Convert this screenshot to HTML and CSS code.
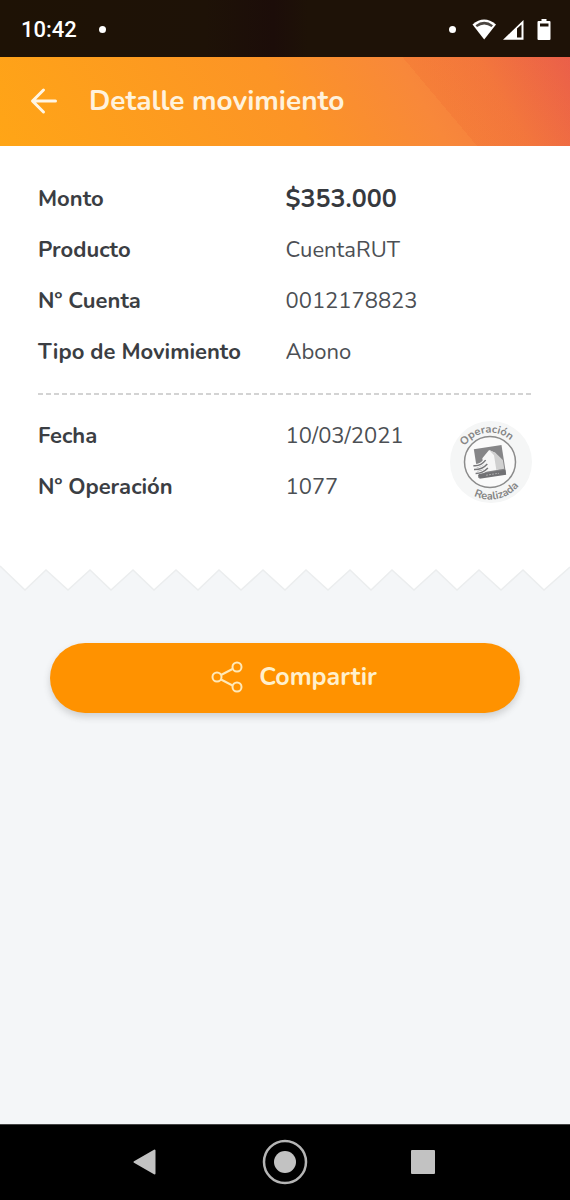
FILE: index.html
```html
<!DOCTYPE html>
<html lang="es">
<head>
<meta charset="utf-8">
<meta name="viewport" content="width=device-width, initial-scale=1">
<title>Detalle movimiento</title>
<link rel="stylesheet" href="styles.css">
</head>
<body>
<div class="screen">
  <div class="status">
    <span class="time">10:42</span>
    <span class="dot"></span>
    <span class="spacer"></span>
    <span class="dot"></span>
    <svg class="status-icons" width="80" height="24" viewBox="0 0 80 24" aria-hidden="true">
      <path d="M0.500 6.500Q12 -3.500 24 6.500L12.200 21.500Z" fill="#fff"/>
      <path d="M3.500 7.200Q12.200 0.500 21 7.200L19.500 9Q12.200 4 5 9Z" fill="#4a4540"/>
      <path d="M31 21.800L51.500 2V21.800Z" fill="#fff"/>
      <path d="M45 10.500L49.500 6.500V19.500H45Z" fill="#1e1207"/>
      <path d="M69.500 1h5v2h3a1 1 0 0 1 1 1v17a1 1 0 0 1-1 1H66.500a1 1 0 0 1-1-1V4a1 1 0 0 1 1-1h3z" fill="#fff"/>
      <path d="M68 5.500h8.500v3H68z" fill="#1e1207"/>
    </svg>
  </div>
  <header class="appbar">
    <button class="back" type="button" aria-label="Volver">
      <svg width="28" height="28" viewBox="0 0 28 28" aria-hidden="true">
        <path d="M25.500 14H3M13.500 3L2.500 14L13.500 25" fill="none" stroke="#fff6e4" stroke-width="3" stroke-linecap="round" stroke-linejoin="round"/>
      </svg>
    </button>
    <h1 class="title">Detalle movimiento</h1>
  </header>
  <main class="content">
    <section class="receipt">
      <dl class="details">
        <dt>Monto</dt><dd class="amount">$353.000</dd>
        <dt>Producto</dt><dd>CuentaRUT</dd>
        <dt>Nº Cuenta</dt><dd>0012178823</dd>
        <dt>Tipo de Movimiento</dt><dd>Abono</dd>
      </dl>
      <div class="divider"></div>
      <div class="operation">
        <dl class="details">
          <dt>Fecha</dt><dd>10/03/2021</dd>
          <dt>Nº Operación</dt><dd>1077</dd>
        </dl>
        <svg class="stamp" width="84" height="84" viewBox="0 0 84 84" role="img" aria-label="Operación Realizada">
          <defs>
            <path id="arc-top" d="M11 42.500A30 30 0 0 1 71 42.500"/>
            <path id="arc-bottom" d="M4 42.500A37 37 0 0 0 78 42.500"/>
          </defs>
          <circle cx="42" cy="42" r="41" fill="#f5f6f6"/>
          <circle cx="41" cy="42" r="25.500" fill="#fafafa" stroke="#8b8b8b" stroke-width="1.500"/>
          <g transform="rotate(-9 41 42)">
            <path d="M27 27H55V56H27Z" fill="#858587"/>
            <path d="M34 49V37L42 30L48 34V51H34Z" fill="#f6f6f6"/>
            <path d="M42 30L48 34L54 42V51H46V36Z" fill="#d0d0d0"/>
            <path d="M24 43Q31 45 37 39.500M24 47Q32 48.500 38 43.500M25 51Q32 52 38 47.500" fill="none" stroke="#f7f7f7" stroke-width="3.500"/>
            <path d="M24 43Q31 45 37 39.500M24 47Q32 48.500 38 43.500M25 51Q32 52 38 47.500" fill="none" stroke="#77777a" stroke-width="1.500"/>
            <path d="M28 52H55V57H28Z" fill="#717174"/>
            <path d="M35 54.500H48" stroke="#aaa" stroke-width="1" stroke-dasharray="2 1"/>
          </g>
          <text class="stamp-text"><textPath href="#arc-top" startOffset="46%" text-anchor="middle">Operación</textPath></text>
          <text class="stamp-text"><textPath href="#arc-bottom" startOffset="57%" text-anchor="middle">Realizada</textPath></text>
        </svg>
      </div>
    </section>
    <svg class="tear" viewBox="0 0 570 28" aria-hidden="true">
      <path d="M0 0V3L25 27L46 7L68 27L90 7L111 27L133 7L154 27L176 7L198 27L219 7L241 27L263 7L285 27L306 7L328 27L350 7L371 27L392 7L414 27L436 7L457 27L479 7L501 27L523 7L544 27L570 4V0Z" fill="#fff"/>
      <path d="M0 3L25 27L46 7L68 27L90 7L111 27L133 7L154 27L176 7L198 27L219 7L241 27L263 7L285 27L306 7L328 27L350 7L371 27L392 7L414 27L436 7L457 27L479 7L501 27L523 7L544 27L570 4" fill="none" stroke="#ebedee" stroke-width="1.500"/>
    </svg>
    <div class="actions">
      <button class="share" type="button">
        <svg width="32" height="32" viewBox="0 0 32 32" aria-hidden="true">
          <path d="M10 14L21.500 8M10 18.500L21.500 24.500" stroke="#ffe9b8" stroke-width="2"/>
          <g fill="none" stroke="#ffe9b8" stroke-width="2">
            <circle cx="6" cy="16" r="4.500"/><circle cx="26" cy="6" r="4.500"/><circle cx="26" cy="26" r="4.500"/>
          </g>
        </svg>
        <span>Compartir</span>
      </button>
    </div>
  </main>
  <nav class="navbar">
    <button type="button" aria-label="Atrás">
      <svg width="48" height="48" viewBox="0 0 48 48" aria-hidden="true"><path d="M11.500 24L31.500 12.500V35.500Z" fill="#c2c2c2" stroke="#c2c2c2" stroke-width="2" stroke-linejoin="round"/></svg>
    </button>
    <button type="button" aria-label="Inicio">
      <svg width="48" height="48" viewBox="0 0 48 48" aria-hidden="true"><circle cx="24" cy="24" r="21" fill="none" stroke="#b5b5b5" stroke-width="2.500"/><circle cx="24" cy="24" r="11" fill="#c2c2c2"/></svg>
    </button>
    <button type="button" aria-label="Recientes">
      <svg width="48" height="48" viewBox="0 0 48 48" aria-hidden="true"><rect x="12" y="12" width="24" height="24" rx="1" fill="#c2c2c2"/></svg>
    </button>
  </nav>
</div>
</body>
</html>
```
FILE: styles.css
```css
* { box-sizing: border-box; }
body {
  margin: 0;
  font-family: Nunito, "Open Sans", "Noto Sans", sans-serif;
  color: #3b3e43;
  background: #f4f6f8;
}
button { border: 0; padding: 0; background: none; font: inherit; color: inherit; }
svg { display: block; }
.screen { min-height: 100vh; display: flex; flex-direction: column; }

.status {
  height: 57px;
  padding: 2px 18px 0 21px;
  display: flex;
  align-items: center;
  background: linear-gradient(90deg, #1e1205 0%, #1e1207 36%, #1c0d09 48%, #1e1207 54%);
}
.time { font: 500 22px Roboto, sans-serif; color: #fff; margin-right: 22px; }
.dot { width: 7px; height: 7px; border-radius: 50%; background: #fff; }
.spacer { flex: 1; }
.status-icons { margin-left: 16px; }

.appbar {
  height: 89px;
  padding: 0 30px 2px;
  display: flex;
  align-items: center;
  gap: 31px;
  background:
    linear-gradient(50deg, transparent 74%, rgba(236, 90, 40, .16) 74%),
    linear-gradient(60deg, #ffa516 0%, #fc9426 50%, #f8883a 72%, #f47c40 85%, #ea6050 100%);
}
.title { margin: 0; font-size: 28px; line-height: 36px; font-weight: 700; color: #fff2dc; }

.content { flex: 1; }
.receipt { padding: 28px 37px 50px 38px; background: #fff; }
.details {
  margin: 0;
  display: grid;
  grid-template-columns: 1fr 1fr;
  grid-auto-rows: 51px;
  font-size: 22px;
  line-height: 50px;
}
.details dt { font-weight: 700; white-space: nowrap; }
.details dd { margin: 0; color: #4c4f54; }
.details .amount { font-size: 25px; font-weight: 700; color: #36393e; }
.divider {
  height: 2px;
  margin: 15px 0 16px;
  background: repeating-linear-gradient(90deg, #d3d3d3 0 5px, transparent 5px 8px);
}
.operation { display: grid; align-items: center; }
.operation > * { grid-area: 1 / 1; }
.stamp { justify-self: end; }
.stamp-text { font-size: 11px; font-weight: 700; fill: #858585; }
.tear { width: 100%; }

.actions { padding: 52px 50px; }
.share {
  width: 100%;
  height: 70px;
  padding: 0 0 2px 18px;
  border-radius: 35px;
  display: flex;
  align-items: center;
  justify-content: center;
  gap: 16px;
  background: #ff9200;
  box-shadow: 0 4px 7px rgba(60, 60, 60, .2);
  color: #fff0cd;
  font-size: 25px;
  line-height: 34px;
  font-weight: 700;
}

.navbar {
  height: 76px;
  padding-bottom: 2px;
  display: flex;
  align-items: center;
  justify-content: center;
  gap: 90px;
  border-top: 1px solid #444;
  background: #000;
}
```
